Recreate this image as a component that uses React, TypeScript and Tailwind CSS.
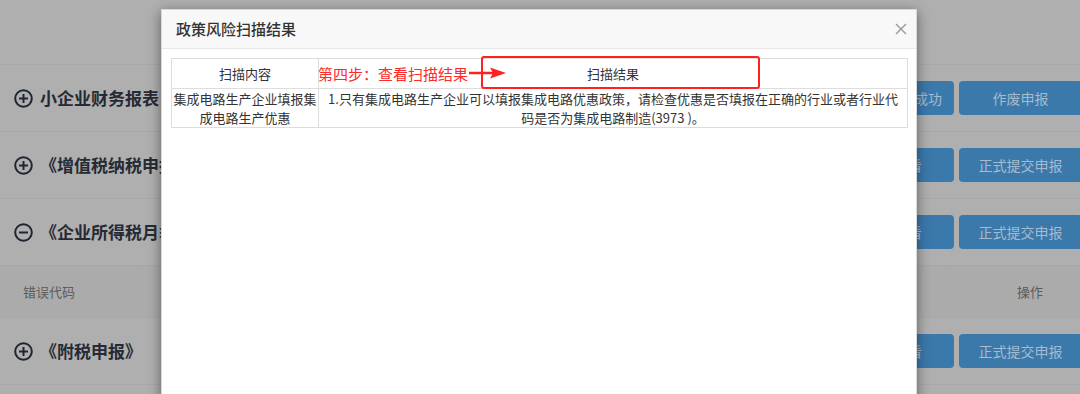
const font = { fontFamily: '"Noto Sans CJK SC", "Noto Sans", sans-serif' };

const PlusIcon = ({ minus = false }: { minus?: boolean }) => (
  <svg width="19" height="19" viewBox="0 0 19 19" fill="none" stroke="#1f2533" strokeWidth="2">
    <circle cx="9.5" cy="9.5" r="8.3" />
    <line x1="5" y1="9.5" x2="14" y2="9.5" />
    {!minus && <line x1="9.5" y1="5" x2="9.5" y2="14" />}
  </svg>
);

const Row = ({ title, minus, first, second, firstPad }: { title: string; minus?: boolean; first: string; second: string; firstPad: string }) => (
  <div className="flex h-[67px] items-center justify-between border-b border-[#a8a8a8] pl-[14px]">
    <div className="flex items-center gap-[7px]">
      <PlusIcon minus={minus} />
      <span className="text-[17px] font-bold text-[#262a33]">{title}</span>
    </div>
    <div className="mr-[-2px] flex gap-[5px] text-[14px] text-[#a6bbcf]">
      <div className={`flex h-[34px] w-[84px] items-center justify-end rounded-[4px] bg-[#3b79ab] ${firstPad}`}>{first}</div>
      <div className="flex h-[34px] w-[123px] items-center justify-center rounded-[4px] bg-[#3b79ab]">{second}</div>
    </div>
  </div>
);

export default function App() {
  return (
    <div className="relative h-[394px] w-[1080px] overflow-hidden bg-[#afafaf]" style={font}>
      {/* page behind the mask */}
      <div className="h-[65px] border-b border-[#a8a8a8]" />
      <Row title="小企业财务报表" first="申报成功" second="作废申报" firstPad="pr-[12px]" />
      <Row title="《增值税纳税申报》" first="查看" second="正式提交申报" firstPad="pr-[32px]" />
      <Row title="《企业所得税月季度申报》" minus first="查看" second="正式提交申报" firstPad="pr-[32px]" />
      <div className="flex h-[52px] items-center border-b border-[#a8a8a8] bg-[#ababab] text-[13px] text-[#5c5c5c]">
        <div className="flex h-full w-[138px] items-center border-r border-[#a9a9a9] pl-[23px]">错误代码</div>
        <div className="h-full flex-1" />
        <div className="flex h-full w-[133px] items-center border-l border-[#a9a9a9] pl-[69px]">操作</div>
      </div>
      <Row title="《附税申报》" first="查看" second="正式提交申报" firstPad="pr-[32px]" />

      {/* modal */}
      <div className="absolute left-[161px] top-[9px] h-[420px] w-[756px] border border-[#d8d8d8] bg-white shadow-[0_3px_12px_rgba(0,0,0,0.45)]">
        <div className="flex h-[39px] items-center justify-between border-b border-[#e8e8e8] bg-[#f8f8f8] pl-[14px] pr-[9px]">
          <span className="text-[15px] font-medium text-[#333]">政策风险扫描结果</span>
          <svg width="12" height="12" viewBox="0 0 12 12" stroke="#9a9a9a" strokeWidth="1.4">
            <line x1="1" y1="1" x2="11" y2="11" />
            <line x1="11" y1="1" x2="1" y2="11" />
          </svg>
        </div>
        <div className="px-[9px] pt-[9px]">
          <table className="w-[737px] border-collapse text-[13px] text-[#333]">
            <tbody>
              <tr className="h-[30px]">
                <td className="w-[147px] border border-[#dddddd] text-center">扫描内容</td>
                <td className="border border-[#dddddd] text-center">扫描结果</td>
              </tr>
              <tr className="h-[39px]">
                <td className="border border-[#dddddd] text-center leading-[19px]">
                  集成电路生产企业填报集<br />成电路生产优惠
                </td>
                <td className="border border-[#dddddd] text-center leading-[19px]">
                  1.只有集成电路生产企业可以填报集成电路优惠政策，请检查优惠是否填报在正确的行业或者行业代<br />码是否为集成电路制造(3973 )。
                </td>
              </tr>
            </tbody>
          </table>
        </div>
      </div>

      {/* annotation */}
      <div className="absolute left-[318px] top-[63px] text-[15px] leading-[22px] text-[#ff2a2a]">第四步：查看扫描结果</div>
      <svg className="absolute left-[468px] top-[66px]" width="40" height="14" viewBox="0 0 40 14">
        <line x1="1" y1="7" x2="26" y2="7" stroke="#ff2020" strokeWidth="2.5" />
        <polygon points="22,1.5 38,7 22,12.5 25,7" fill="#ff2020" />
      </svg>
      <div className="absolute left-[481px] top-[56px] h-[33px] w-[279px] rounded-[3px] border-2 border-[#ff2020]" />
    </div>
  );
}
